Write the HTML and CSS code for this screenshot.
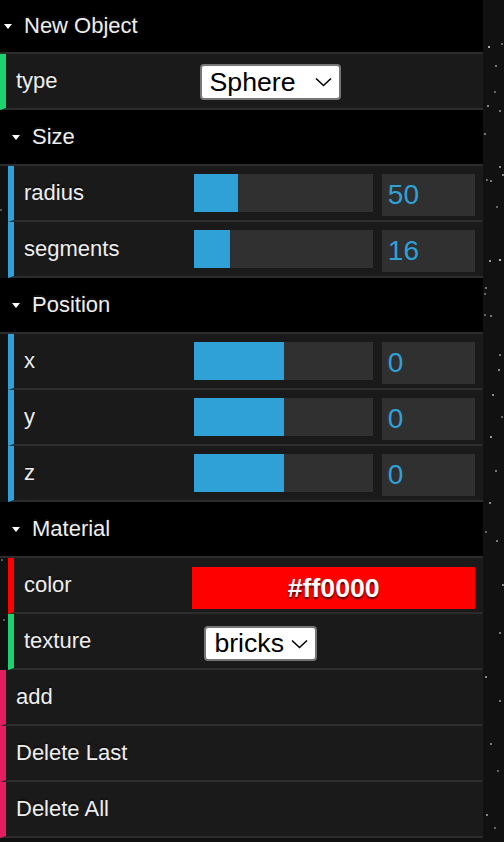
FILE: index.html
```html
<!DOCTYPE html>
<html>
<head>
<meta charset="utf-8">
<link rel="stylesheet" href="styles.css">
</head>
<body>
<div class="panel">
  <div class="title top"><span class="tri"></span>New Object</div>
  <div class="row string top-row">
    <div class="label">type</div>
    <div class="ctrl"><div class="select sel-type"><span>Sphere</span><svg class="chev" width="17" height="10" viewBox="0 0 17 10"><path d="M1 1.5 L8.5 8.5 L16 1.5" fill="none" stroke="#000" stroke-width="1.6"/></svg></div></div>
  </div>

  <div class="folder">
    <div class="title nested"><span class="tri"></span>Size</div>
    <div class="row number">
      <div class="label">radius</div>
      <div class="ctrl"><div class="slider"><div class="fill" style="width:24.6%"></div></div><div class="num">50</div></div>
    </div>
    <div class="row number">
      <div class="label">segments</div>
      <div class="ctrl"><div class="slider"><div class="fill" style="width:20.2%"></div></div><div class="num">16</div></div>
    </div>
  </div>

  <div class="folder">
    <div class="title nested"><span class="tri"></span>Position</div>
    <div class="row number">
      <div class="label">x</div>
      <div class="ctrl"><div class="slider"><div class="fill" style="width:50%"></div></div><div class="num">0</div></div>
    </div>
    <div class="row number">
      <div class="label">y</div>
      <div class="ctrl"><div class="slider"><div class="fill" style="width:50%"></div></div><div class="num">0</div></div>
    </div>
    <div class="row number">
      <div class="label">z</div>
      <div class="ctrl"><div class="slider"><div class="fill" style="width:50%"></div></div><div class="num">0</div></div>
    </div>
  </div>

  <div class="folder">
    <div class="title nested"><span class="tri"></span>Material</div>
    <div class="row color">
      <div class="label">color</div>
      <div class="ctrl"><div class="colorbox">#ff0000</div></div>
    </div>
    <div class="row string">
      <div class="label">texture</div>
      <div class="ctrl"><div class="select sel-tex"><span>bricks</span><svg class="chev" width="17" height="10" viewBox="0 0 17 10"><path d="M1 1.5 L8.5 8.5 L16 1.5" fill="none" stroke="#000" stroke-width="1.6"/></svg></div></div>
    </div>
  </div>

  <div class="row function top-row"><div class="label">add</div></div>
  <div class="row function top-row"><div class="label">Delete Last</div></div>
  <div class="row function top-row"><div class="label">Delete All</div></div>
</div>
</body>
</html>
```

FILE: styles.css
```css
html, body {
  margin: 0;
  padding: 0;
}
body {
  width: 504px;
  height: 842px;
  overflow: hidden;
  background-color: #111;
  background-image:
    radial-gradient(circle at 489px 47px, #aaa 0.7px, transparent 1.3px),
    radial-gradient(circle at 496px 66px, #777 0.7px, transparent 1.3px),
    radial-gradient(circle at 488px 106px, #888 0.7px, transparent 1.3px),
    radial-gradient(circle at 502px 44px, #666 0.8px, transparent 1.4px),
    radial-gradient(circle at 495px 92px, #666 0.7px, transparent 1.3px),
    radial-gradient(circle at 500px 111px, #777 0.7px, transparent 1.3px),
    radial-gradient(circle at 485px 134px, #777 0.7px, transparent 1.3px),
    radial-gradient(circle at 491px 181px, #777 0.7px, transparent 1.3px),
    radial-gradient(circle at 500px 167px, #888 0.7px, transparent 1.3px),
    radial-gradient(circle at 503px 175px, #888 0.7px, transparent 1.3px),
    radial-gradient(circle at 487px 180px, #666 0.7px, transparent 1.3px),
    radial-gradient(circle at 490px 261px, #999 0.7px, transparent 1.3px),
    radial-gradient(circle at 486px 288px, #777 0.7px, transparent 1.3px),
    radial-gradient(circle at 497px 207px, #666 0.7px, transparent 1.3px),
    radial-gradient(circle at 500px 260px, #bbb 0.7px, transparent 1.3px),
    radial-gradient(circle at 485px 294px, #666 0.7px, transparent 1.3px),
    radial-gradient(circle at 491px 316px, #777 0.7px, transparent 1.3px),
    radial-gradient(circle at 485px 315px, #666 0.7px, transparent 1.3px),
    radial-gradient(circle at 500px 355px, #777 0.7px, transparent 1.3px),
    radial-gradient(circle at 499px 370px, #888 0.7px, transparent 1.3px),
    radial-gradient(circle at 493px 395px, #888 0.7px, transparent 1.3px),
    radial-gradient(circle at 502px 417px, #666 0.7px, transparent 1.3px),
    radial-gradient(circle at 491px 437px, #999 0.7px, transparent 1.3px),
    radial-gradient(circle at 496px 471px, #777 0.7px, transparent 1.3px),
    radial-gradient(circle at 490px 503px, #888 0.7px, transparent 1.3px),
    radial-gradient(circle at 486px 532px, #666 0.7px, transparent 1.3px),
    radial-gradient(circle at 497px 541px, #777 0.7px, transparent 1.3px),
    radial-gradient(circle at 503px 585px, #888 0.7px, transparent 1.3px),
    radial-gradient(circle at 500px 633px, #777 0.7px, transparent 1.3px),
    radial-gradient(circle at 486px 677px, #888 0.7px, transparent 1.3px),
    radial-gradient(circle at 500px 701px, #777 0.7px, transparent 1.3px),
    radial-gradient(circle at 491px 744px, #777 0.7px, transparent 1.3px),
    radial-gradient(circle at 498px 771px, #666 0.7px, transparent 1.3px),
    radial-gradient(circle at 487px 815px, #888 0.7px, transparent 1.3px),
    radial-gradient(circle at 495px 828px, #666 0.7px, transparent 1.3px),
    radial-gradient(circle at 2px 560px, #666 0.6px, transparent 1.2px),
    radial-gradient(circle at 4px 620px, #666 0.6px, transparent 1.2px),
    radial-gradient(circle at 1px 210px, #666 0.6px, transparent 1.2px);
  font-family: "Liberation Sans", Arial, sans-serif;
  color: #eee;
}

.panel {
  width: 483px;
  display: flex;
  flex-direction: column;
}

.title {
  height: 52px;
  background: #000;
  border-bottom: 2px solid #2c2c2c;
  font-size: 22px;
  color: #eee;
  display: flex;
  align-items: center;
  text-shadow: 0 -2px 0 #111;
}
.title .tri {
  width: 0;
  height: 0;
  border-left: 4px solid transparent;
  border-right: 4px solid transparent;
  border-top: 5px solid #fff;
  margin-right: 12px;
  margin-top: 1px;
}
.title.top {
  padding-left: 4px;
  padding-bottom: 1px;
  box-sizing: border-box;
  height: 54px;
}
.title.nested {
  height: 54px;
  margin-left: -8px;
  padding-left: 12px;
}

.folder {
  border-left: 8px solid transparent;
  display: flex;
  flex-direction: column;
}

.row {
  height: 54px;
  background: #1a1a1a;
  border-bottom: 2px solid #2c2c2c;
  border-left: 6px solid #2fa1d6;
  padding: 0 8px 0 10px;
  display: flex;
  font-size: 22px;
  text-shadow: 0 -2px 0 #111;
}
.row.string { border-left-color: #1ed36f; }
.row.number { border-left-color: #2fa1d6; }
.row.color { border-left-color: #ff0000; }
.row.function { border-left-color: #e61d5f; }

.label {
  width: 40%;
  flex: none;
  line-height: 54px;
  white-space: nowrap;
  overflow: hidden;
}
.ctrl {
  width: 60%;
  flex: none;
  display: flex;
  align-items: flex-start;
  justify-content: space-between;
}

.slider {
  width: 66%;
  margin-left: -10px;
  height: 38px;
  margin-top: 8px;
  background: #303030;
  flex: none;
}
.fill {
  height: 100%;
  background: #2fa1d6;
}
.num {
  width: 30%;
  flex: none;
  box-sizing: content-box;
  margin-top: 8px;
  height: 30px;
  padding: 6px;
  background: #303030;
  color: #2fa1d6;
  font-size: 28px;
  line-height: 30px;
  text-shadow: none;
}

.colorbox {
  flex: none;
  width: 100%;
  margin-left: -12px;
  box-sizing: content-box;
  padding: 6px;
  margin-top: 9px;
  height: 30px;
  line-height: 30px;
  background: #ff0000;
  color: #fff;
  font-weight: bold;
  font-size: 26.67px;
  text-align: center;
  text-shadow: rgba(0, 0, 0, 0.7) 0 2px 2px;
}

.select {
  box-sizing: border-box;
  background: #fff;
  border: 2px solid #767676;
  border-radius: 4px;
  color: #000;
  font-size: 26.67px;
  height: 36px;
  display: flex;
  align-items: center;
  justify-content: space-between;
  padding: 0 7px 0 8px;
  text-shadow: none;
}
.sel-type {
  width: 141px;
  margin-top: 10px;
}
.sel-tex {
  width: 113px;
  margin-top: 12px;
  height: 35px;
}
.chev {
  flex: none;
}
```
